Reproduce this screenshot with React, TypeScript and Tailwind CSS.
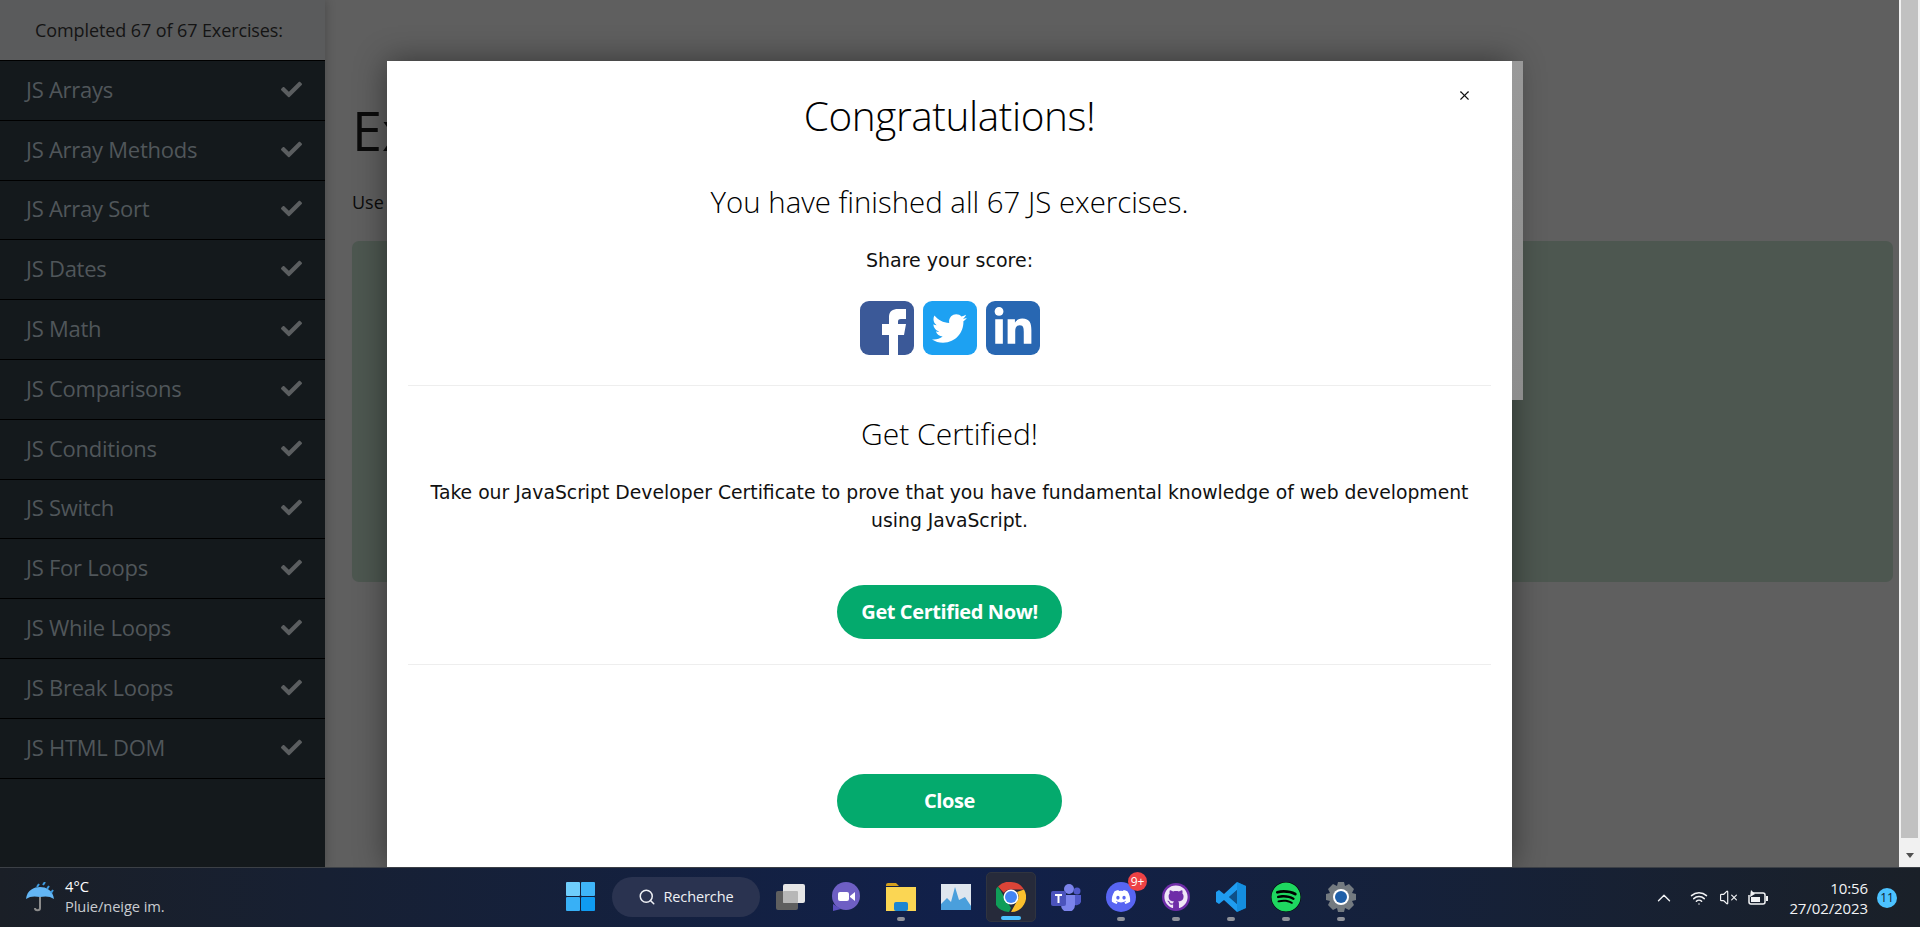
import React from "react";
import { FaCheck, FaTwitter, FaLinkedinIn, FaGithub, FaSpotify, FaDiscord } from "react-icons/fa";
import { ChevronUp, Search, VolumeX, Wifi, X } from "lucide-react";

const topics = [
  "JS Arrays",
  "JS Array Methods",
  "JS Array Sort",
  "JS Dates",
  "JS Math",
  "JS Comparisons",
  "JS Conditions",
  "JS Switch",
  "JS For Loops",
  "JS While Loops",
  "JS Break Loops",
  "JS HTML DOM",
];

const Sidebar = () => (
  <div className="w-[325px] shrink-0 bg-[#14191c] flex flex-col shadow-[0_0_10px_rgba(0,0,0,0.25)] z-10">
    <div className="h-[60px] bg-[#5a5b5c] text-[#141414] text-[18px] flex items-center justify-center pr-[7px] font-['Open_Sans',sans-serif] tracking-[-0.1px]">
      Completed 67 of 67 Exercises:
    </div>
    {topics.map((t) => (
      <div
        key={t}
        className="h-[59.8px] border-t-[1px] border-black last:border-b-[1px] last:h-[60.8px] flex items-center justify-between pl-[26px] pr-[23px] text-[#50565a] text-[22px] font-['Open_Sans',sans-serif] tracking-[-0.25px]"
      >
        <span className="mt-[-2px]">{t}</span>
        <FaCheck size={21} className="text-[#5b5e60] mt-[-2px]" />
      </div>
    ))}
  </div>
);

const Main = () => (
  <div className="flex-1 pl-[27px] pr-[6px] pt-[98px] font-['Open_Sans',sans-serif] text-[#0b0b0b] overflow-hidden">
    <h1 className="text-[54px] leading-[64px] whitespace-nowrap">Exercise</h1>
    <p className="mt-[26px] text-[18px] leading-[28px] whitespace-nowrap">Use the</p>
    <div className="mt-[25px] h-[341px] rounded-[7px] bg-[#4d5750]" />
  </div>
);

const PageScrollbar = () => (
  <div className="w-[21px] shrink-0 bg-[#f1f1f1] flex flex-col pl-[2px] pr-[2px]">
    <div className="flex-1">
      <div className="h-[838px] w-full bg-[#c1c1c1]" />
    </div>
    <div className="h-[24px] flex items-center justify-center">
      <div className="w-0 h-0 border-l-[4px] border-r-[4px] border-t-[5px] border-l-transparent border-r-transparent border-t-[#505050]" />
    </div>
  </div>
);

const Modal = () => (
  <div className="absolute left-[387px] top-[61px] w-[1125px] bottom-0 bg-white z-20 shadow-[0_0_30px_rgba(0,0,0,0.45)] px-[21px] font-['DejaVu_Sans',sans-serif] text-[#111111] text-center">
    <X size={15} strokeWidth={1.8} className="absolute left-[1070px] top-[27px] text-[#111]" />
    <div className="absolute left-[1125px] top-0 w-[11px] h-[339px] bg-gradient-to-b from-[#999] to-[#8c8c8c]" />
    <h1 className="pt-[20px] text-[40.5px] leading-[70px] text-black font-['Open_Sans',sans-serif] font-light tracking-[-0.4px]">Congratulations!</h1>
    <h2 className="mt-[33px] text-[29.4px] leading-[36px] text-black font-['Open_Sans',sans-serif] font-light">You have finished all 67 JS exercises.</h2>
    <p className="mt-[27px] text-[19px] leading-[26px]">Share your score:</p>
    <div className="mt-[28px] flex justify-center gap-[9px]">
      <svg width="54" height="54" viewBox="0 0 54 54">
        <rect width="54" height="54" rx="9" fill="#3b5998" />
        <path d="M29 54 V34 H22 V23 H29 V16 C29 10 33 8 38 8 H46 V18 H41 C38.5 18 38 19 38 21 V23 H46 L44 34 H38 V54Z" fill="#fff" />
      </svg>
      <div className="w-[54px] h-[54px] rounded-[9px] bg-[#1da1f2] flex items-center justify-center">
        <FaTwitter size={35} className="text-white" />
      </div>
      <div className="w-[54px] h-[54px] rounded-[9px] bg-[#2867b2] flex items-center justify-center">
        <FaLinkedinIn size={42} className="text-white" />
      </div>
    </div>
    <div className="mt-[30px] border-t-[1px] border-[#eeeeee]" />
    <h3 className="mt-[28px] text-[30px] leading-[40px] text-black font-['Open_Sans',sans-serif] font-light">Get Certified!</h3>
    <p className="mt-[25px] text-[18.8px] leading-[28px] px-[15px]">
      Take our JavaScript Developer Certificate to prove that you have fundamental knowledge of web development using JavaScript.
    </p>
    <button className="mt-[50px] w-[225px] h-[54px] rounded-[27px] bg-[#04aa6d] text-white text-[20px] font-bold font-['Open_Sans',sans-serif] tracking-[-0.4px]">
      Get Certified Now!
    </button>
    <div className="mt-[25px] border-t-[1px] border-[#eeeeee]" />
    <button className="mt-[109px] w-[225px] h-[54px] rounded-[27px] bg-[#04aa6d] text-white text-[20px] font-bold font-['Open_Sans',sans-serif] tracking-[-0.4px]">
      Close
    </button>
  </div>
);

const Slot = ({ children, active, open }: { children: React.ReactNode; active?: boolean; open?: boolean }) => (
  <div className={`relative w-[50px] h-[50px] flex items-center justify-center rounded-[5px] ${active ? "bg-[#262a3a] border border-[#30343f]" : ""}`}>
    {children}
    {open && (
      <span className={`absolute bottom-[1px] h-[4px] rounded-full ${active ? "w-[20px] bg-[#4cc2ff]" : "w-[8px] bg-[#8e9199]"}`} />
    )}
  </div>
);

const Taskbar = () => (
  <div className="h-[60px] shrink-0 relative z-30 border-t-[1px] border-[#3c4046] bg-gradient-to-r from-[#1a1f27] via-[#11204a] to-[#1a2028] flex items-center justify-between text-white font-['Open_Sans',sans-serif]">
    <div className="flex items-center pl-[25px] gap-[9px] w-[300px]">
      <svg width="30" height="32" viewBox="0 0 30 32">
        <path d="M1 17 C2 8 9 5 15 5 C21 5 28 8 29 17 C25 14 20 14 15 15 C10 14 5 14 1 17Z" fill="#63b6f5" />
        <path d="M15 15 V26 C15 29 10 29 10 26" stroke="#8b8b8b" strokeWidth="2" fill="none" />
        <path d="M14 2 L12 5 M20 0 L18 3 M24 4 L22 7 M28 8 L26 11" stroke="#3d9be0" strokeWidth="2" />
      </svg>
      <div className="text-[14.7px] leading-[20px] mt-[-3px] ml-[1px]">
        <div>4°C</div>
        <div className="text-[#c8cbd0] tracking-[-0.1px] whitespace-nowrap">Pluie/neige im.</div>
      </div>
    </div>
    <div className="absolute left-[556px] top-[4px] flex items-center gap-[5px]">
      <Slot>
        <svg width="30" height="30" viewBox="0 0 30 30">
          <rect x="0" y="0" width="14" height="14" rx="1" fill="#6fcdfb" />
          <rect x="15" y="0" width="14" height="14" rx="1" fill="#3fb5f8" />
          <rect x="0" y="15" width="14" height="14" rx="1" fill="#38b0f6" />
          <rect x="15" y="15" width="14" height="14" rx="1" fill="#0f9bf2" />
        </svg>
      </Slot>
      <div className="w-[148px] h-[40px] ml-[1px] mr-[1px] rounded-full bg-[#2a3350] flex items-center justify-center gap-[7px] text-[14.5px] text-[#eef0f4] tracking-[-0.1px]">
        <Search size={18} strokeWidth={2} />
        Recherche
      </div>
      <Slot>
        <svg width="32" height="30" viewBox="0 0 32 30">
          <rect x="1" y="9" width="22" height="19" rx="2" fill="#5f5f5f" />
          <rect x="8" y="2" width="22" height="19" rx="2" fill="#e6e6e6" />
          <rect x="8" y="9" width="15" height="12" rx="1" fill="#b7b7b7" />
        </svg>
      </Slot>
      <Slot>
        <svg width="30" height="30" viewBox="0 0 30 30">
          <circle cx="15" cy="14" r="14" fill="#6e5fc4" />
          <path d="M2 22 L2 29 L10 27Z" fill="#5b4fbf" />
          <rect x="7" y="10" width="11" height="9" rx="2" fill="#fff" />
          <path d="M19 14 L24 10 V19 L19 15Z" fill="#fff" />
        </svg>
      </Slot>
      <Slot open>
        <svg width="30" height="28" viewBox="0 0 30 28">
          <path d="M0 2 a2 2 0 0 1 2-2 H10 L13 3 H0Z" fill="#d49f1d" />
          <rect x="0" y="4" width="30" height="24" fill="#fbd653" />
          <rect x="8" y="19" width="14" height="9" rx="2" fill="#1b86d1" />
        </svg>
      </Slot>
      <Slot>
        <svg width="30" height="26" viewBox="0 0 30 26">
          <rect width="30" height="26" fill="#dfe6ee" />
          <path d="M0 20 L6 14 L10 18 L14 3 L18 16 L24 13 L30 22 V26 H0Z" fill="#4a9fdc" />
        </svg>
      </Slot>
      <Slot active open>
        <svg width="30" height="30" viewBox="0 0 30 30">
          <path d="M15 0 A15 15 0 0 1 28 7.5 H15 A7.5 7.5 0 0 0 8 11 L2 4.5 A15 15 0 0 1 15 0Z" fill="#db4437" />
          <path d="M2 4.5 L9 16 L15 26 L13 30 A15 15 0 0 1 2 4.5Z" fill="#0f9d58" />
          <path d="M28 7.5 A15 15 0 0 1 15 30 L21 19 A7.5 7.5 0 0 0 21 10Z" fill="#fbc02d" />
          <circle cx="15" cy="15" r="7.5" fill="#fff" />
          <circle cx="15" cy="15" r="6" fill="#4285f4" />
        </svg>
      </Slot>
      <Slot>
        <svg width="30" height="28" viewBox="0 0 30 28">
          <circle cx="18" cy="6" r="5" fill="#7b83eb" />
          <circle cx="26" cy="8" r="3.5" fill="#5059c9" />
          <path d="M22 12 H30 V19 A5 5 0 0 1 22 21Z" fill="#5059c9" />
          <path d="M9 12 H24 V22 A7 7 0 0 1 10 22Z" fill="#7b83eb" />
          <rect x="0" y="8" width="15" height="15" rx="2" fill="#4b53bc" />
          <path d="M4 11 H11 V13 H8.5 V20 H6.5 V13 H4Z" fill="#fff" />
        </svg>
      </Slot>
      <Slot open>
        <div className="w-[30px] h-[30px] rounded-full bg-[#5865f2] flex items-center justify-center">
          <FaDiscord size={20} className="text-white" />
        </div>
        <span className="absolute right-[-1px] top-[0px] w-[19px] h-[19px] rounded-full bg-[#ed4245] text-[12px] leading-[19px] text-center">9+</span>
      </Slot>
      <Slot open>
        <div className="w-[28px] h-[28px] rounded-full bg-[#6f2da8] flex items-center justify-center">
          <FaGithub size={24} className="text-[#efe6f6]" />
        </div>
      </Slot>
      <Slot open>
        <svg width="30" height="30" viewBox="0 0 30 30">
          <path d="M21 0 L30 4 V26 L21 30 L8 18 L3 22 L0 20 V10 L3 8 L8 12Z M21 8 L13 15 L21 22Z" fill="#1f9cf0" fillRule="evenodd" />
          <path d="M21 0 L30 4 V26 L21 30Z M21 8 L21 22 L13 15Z" fill="#0a7fd0" fillRule="evenodd" opacity="0.5" />
        </svg>
      </Slot>
      <Slot open>
        <FaSpotify size={30} className="text-[#1ed760] bg-black rounded-full" />
      </Slot>
      <Slot open>
        <svg width="30" height="30" viewBox="0 0 30 30">
          <path d="M12 0 H18 L19 4 L23 2 L28 7 L26 11 L30 12 V18 L26 19 L28 23 L23 28 L19 26 L18 30 H12 L11 26 L7 28 L2 23 L4 19 L0 18 V12 L4 11 L2 7 L7 2 L11 4Z" fill="#737a80" />
          <circle cx="15" cy="15" r="8" fill="#fff" />
          <circle cx="15" cy="15" r="6" fill="#1f5fa8" />
        </svg>
      </Slot>
    </div>
    <div className="flex items-center pr-[23px] text-[#f2f3f5]">
      <ChevronUp size={22} strokeWidth={1.5} />
      <Wifi size={18} className="ml-[15px]" />
      <VolumeX size={19} strokeWidth={1.5} className="ml-[11px]" />
      <svg width="20" height="16" viewBox="0 0 20 16" className="ml-[10px]">
        <path d="M5 3 H15 A2 2 0 0 1 17 5 V12 A2 2 0 0 1 15 14 H3 A2 2 0 0 1 1 12 V5" fill="none" stroke="#f2f3f5" strokeWidth="1.5" />
        <rect x="3" y="7" width="9" height="5" fill="#f2f3f5" />
        <rect x="18" y="6" width="2" height="5" fill="#f2f3f5" />
        <path d="M3 0 L7 4 L2 7Z" fill="#f2f3f5" />
      </svg>
      <div className="ml-[21px] text-right text-[15px] leading-[20px] tracking-[-0.1px]">
        <div>10:56</div>
        <div>27/02/2023</div>
      </div>
      <span className="ml-[9px] w-[20px] h-[20px] rounded-full bg-[#4cc2ff] text-[#102030] text-[12px] leading-[20px] text-center">11</span>
    </div>
  </div>
);

export default function App() {
  return (
    <div className="w-[1920px] h-[927px] flex flex-col overflow-hidden relative bg-[#5f5f5f]">
      <div className="flex-1 flex min-h-0 relative">
        <Sidebar />
        <Main />
        <PageScrollbar />
        <Modal />
      </div>
      <Taskbar />
    </div>
  );
}
